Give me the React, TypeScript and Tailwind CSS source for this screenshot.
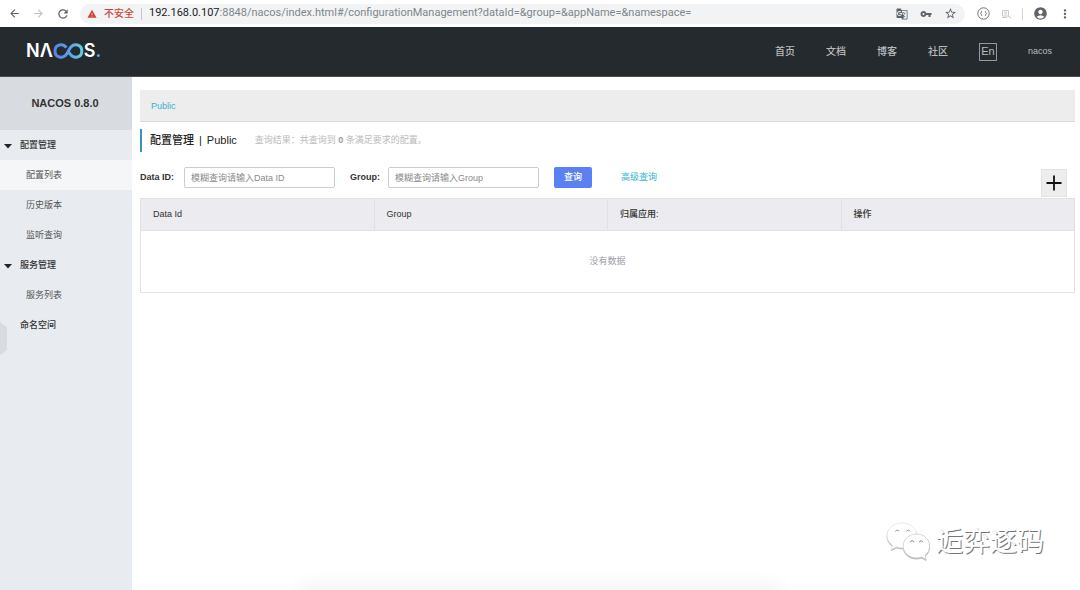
import { FC, ReactNode } from "react";
import {
  MdAccountCircle,
  MdArrowBack,
  MdArrowForward,
  MdGTranslate,
  MdMoreVert,
  MdRefresh,
  MdStarBorder,
  MdVpnKey,
  MdWarning,
} from "react-icons/md";

interface MenuItem {
  title: string;
  active?: boolean;
  children?: MenuItem[];
}

const NAV_LINKS = ["首页", "文档", "博客", "社区"];

const MENU: MenuItem[] = [
  {
    title: "配置管理",
    children: [
      { title: "配置列表", active: true },
      { title: "历史版本" },
      { title: "监听查询" },
    ],
  },
  { title: "服务管理", children: [{ title: "服务列表" }] },
  { title: "命名空间" },
];

const COLUMNS = ["Data Id", "Group", "归属应用:", "操作"];

const IconButton: FC<{ label: string; children: ReactNode }> = ({
  label,
  children,
}) => (
  <button type="button" aria-label={label} className="shrink-0">
    {children}
  </button>
);

const BrowserBar: FC = () => (
  <div className="flex h-[27px] items-center bg-white px-2 text-[#5f6368]">
    <div className="flex w-[72px] shrink-0 items-center gap-[11px]">
      <IconButton label="Back">
        <MdArrowBack size={13} />
      </IconButton>
      <IconButton label="Forward">
        <MdArrowForward size={13} className="text-[#c0c2c5]" />
      </IconButton>
      <IconButton label="Reload">
        <MdRefresh size={14} />
      </IconButton>
    </div>
    <div className="flex h-5 min-w-0 flex-1 items-center rounded-full bg-[#f1f3f4] pr-2 pl-[7px]">
      <MdWarning size={10} className="shrink-0 text-[#d0473a]" />
      <span className="mx-[7px] shrink-0 text-[10px] font-medium text-[#d0473a]">
        不安全
      </span>
      <span className="mr-[7px] h-3 w-px shrink-0 bg-[#c4c7ca]" />
      <span className="min-w-0 flex-1 truncate font-['Roboto',sans-serif] text-[11px] text-[#80868b]">
        <span className="text-[#202124]">192.168.0.107</span>
        :8848/nacos/index.html#/configurationManagement?dataId=&amp;group=&amp;appName=&amp;namespace=
      </span>
      <span className="flex items-center gap-3">
        <IconButton label="Translate">
          <MdGTranslate size={12} />
        </IconButton>
        <IconButton label="Passwords">
          <MdVpnKey size={12} />
        </IconButton>
        <IconButton label="Bookmark">
          <MdStarBorder size={13} />
        </IconButton>
      </span>
    </div>
    <div className="ml-3 flex items-center gap-2.5">
      <IconButton label="JSON viewer">
        <svg width="13" height="13" viewBox="0 0 13 13" fill="none" stroke="currentColor">
          <circle cx="6.5" cy="6.5" r="5.7" strokeWidth="0.9" />
          <path d="M5 4C4.2 4 4.5 6.5 3.6 6.5C4.5 6.5 4.2 9 5 9M8 4C8.8 4 8.5 6.5 9.4 6.5C8.5 6.5 8.8 9 8 9" strokeWidth="0.9" />
        </svg>
      </IconButton>
      <IconButton label="Extension">
        <svg width="12" height="12" viewBox="0 0 12 12" fill="none" stroke="#c9cbcd">
          <path d="M2.5 2.5H8.5V8H2.5ZM4 4.2H7M4 6H7M2 9.5H7M8 8L11 9.8" />
        </svg>
      </IconButton>
      <span className="h-3 w-px bg-[#d5d7d9]" />
      <IconButton label="Profile">
        <MdAccountCircle size={15} />
      </IconButton>
      <IconButton label="Menu">
        <MdMoreVert size={14} />
      </IconButton>
    </div>
  </div>
);

const Logo: FC = () => (
  <a
    href="#/"
    className="mb-0.5 flex items-center font-['Inter',sans-serif] text-[18px] leading-none font-semibold text-white"
  >
    <span>N</span>
    <span>Λ</span>
    <svg width="31" height="16" viewBox="0 0 31 16" fill="none" aria-hidden="true">
      <defs>
        <linearGradient id="loop" x1="0" y1="0" x2="31" y2="0" gradientUnits="userSpaceOnUse">
          <stop stopColor="#5b7fe8" />
          <stop offset="0.5" stopColor="#5a9fe8" />
          <stop offset="1" stopColor="#67d3df" />
        </linearGradient>
      </defs>
      <path
        d="M13.4 4.6C9.8 0.1 2 0.9 2 8C2 15.1 9.8 15.9 13.4 11.4L17.4 4.6C20.8 0.1 28.8 0.9 28.8 8C28.8 15.1 20.8 15.9 17.4 11.4L15.2 8.6"
        stroke="url(#loop)"
        strokeWidth="3"
      />
    </svg>
    <span>S</span>
    <span className="text-[#4fb8e0]">.</span>
  </a>
);

const Header: FC = () => (
  <header className="flex h-[50px] items-center justify-between border-b border-[#4a4e53] bg-[#252a2f] pr-7 pl-[26px] text-[#b9bbbd]">
    <Logo />
    <nav className="flex items-center gap-[31px] text-[10px]">
      {NAV_LINKS.map(link => (
        <a key={link} href="#/" className="font-medium">
          {link}
        </a>
      ))}
      <button
        type="button"
        className="h-[18px] w-[18px] border border-[#96999b] text-[11px] leading-none"
      >
        En
      </button>
      <a href="#/" className="text-[9px]">
        nacos
      </a>
    </nav>
  </header>
);

const SideMenu: FC = () => (
  <aside className="relative w-[132px] shrink-0 bg-[#e8ecf1] text-[9px] text-[#333]">
    <h1 className="flex h-[53px] items-center justify-center bg-[#d8dce1] pr-0.5 text-[11px] font-bold">
      NACOS 0.8.0
    </h1>
    <nav>
      <ul>
        {MENU.map(item => (
          <li key={item.title}>
            <a
              href="#/"
              className="flex h-[30px] items-center pt-0.5 pl-1 font-medium"
            >
              <span className="w-4">
                {item.children && (
                  <svg width="8" height="5" viewBox="0 0 8 5" aria-hidden="true">
                    <path d="M0 0H8L4 4.5Z" fill="#22262a" />
                  </svg>
                )}
              </span>
              {item.title}
            </a>
            {item.children && (
              <ul>
                {item.children.map(child => (
                  <li key={child.title}>
                    <a
                      href="#/"
                      className={
                        child.active
                          ? "flex h-[30px] items-center bg-[#f4f6f8] pt-0.5 pl-[26px] text-[#555]"
                          : "flex h-[30px] items-center pt-0.5 pl-[26px] text-[#555]"
                      }
                    >
                      {child.title}
                    </a>
                  </li>
                ))}
              </ul>
            )}
          </li>
        ))}
      </ul>
    </nav>
    <button type="button" aria-label="收起" className="absolute top-[245px] left-0">
      <svg width="7" height="33" viewBox="0 0 7 33">
        <path d="M0 0L7 5V28L0 33Z" fill="#d8dbdf" />
      </svg>
    </button>
  </aside>
);

const SearchForm: FC = () => (
  <form className="flex items-start text-[9px]" onSubmit={e => e.preventDefault()}>
    <div className="flex h-[21px] items-center">
      <label htmlFor="dataId" className="w-11 font-bold">
        Data ID:
      </label>
      <input
        id="dataId"
        placeholder="模糊查询请输入Data ID"
        className="mr-[15px] h-[21px] w-[151px] rounded-xs border border-[#c9ccd2] bg-white px-1.5 placeholder:text-[#8a8a8a]"
      />
      <label htmlFor="group" className="w-[38px] font-bold">
        Group:
      </label>
      <input
        id="group"
        placeholder="模糊查询请输入Group"
        className="mr-[15px] h-[21px] w-[151px] rounded-xs border border-[#c9ccd2] bg-white px-1.5 placeholder:text-[#8a8a8a]"
      />
      <button
        type="submit"
        className="h-[21px] w-[38px] rounded-xs bg-[#5a80f2] font-medium text-white"
      >
        查询
      </button>
      <a href="#/" className="ml-[29px] text-[#33b4d4]">
        高级查询
      </a>
    </div>
    <button
      type="button"
      aria-label="新建配置"
      className="mt-0.5 mr-2 ml-auto flex h-7 w-[26px] items-center justify-center border border-[#e2e2e2] bg-[#ededed]"
    >
      <svg width="16" height="16" viewBox="0 0 16 16" stroke="#111" strokeWidth="1.8">
        <path d="M8 0.5V15.5M0.5 8H15.5" />
      </svg>
    </button>
  </form>
);

const ConfigTable: FC = () => (
  <table className="mt-px w-full table-fixed border-collapse border border-[#e2e3e7] text-[9px]">
    <thead className="bg-[#ebebf0]">
      <tr className="h-8">
        {COLUMNS.map(column => (
          <th
            key={column}
            className="border border-[#e0e1e6] px-3 text-left font-medium text-[#333]"
          >
            {column}
          </th>
        ))}
      </tr>
    </thead>
    <tbody>
      <tr className="h-[62px]">
        <td colSpan={COLUMNS.length} className="text-center text-[#999ca3]">
          没有数据
        </td>
      </tr>
    </tbody>
  </table>
);

const Watermark: FC = () => (
  <div className="pointer-events-none absolute right-9 bottom-7 flex items-center gap-1.5">
    <svg
      width="46"
      height="42"
      viewBox="0 0 46 42"
      fill="#fff"
      className="drop-shadow-[0_1px_0_rgba(0,0,0,0.3)]"
    >
      <path
        d="M18 3C9.5 3 3 8.6 3 15.5C3 19.5 5 23 8.5 25.2L7.5 29.5L12.3 27.1C14 27.6 16 27.9 18 27.9C26.5 27.9 33 22.5 33 15.5C33 8.6 26.5 3 18 3Z"
        stroke="#dedede"
        strokeWidth="0.7"
      />
      <path
        d="M32.5 14C25 14 19.2 19.3 19.2 26C19.2 32.7 25 38 32.5 38C34.3 38 36 37.7 37.6 37.1L42 39.5L41.2 35.2C44 33 45.6 29.7 45.6 26C45.6 19.3 40 14 32.5 14Z"
        stroke="#c4c4c4"
        strokeWidth="0.7"
      />
      <g fill="none" stroke="#8b8b8b" strokeWidth="0.9">
        <path d="M11.5 11.5A1.8 1.8 0 0 1 15 11.5M22.5 11.5A1.8 1.8 0 0 1 26 11.5" />
        <path d="M26.5 22.3A1.6 1.6 0 0 1 29.7 22.3M35.5 22.3A1.6 1.6 0 0 1 38.7 22.3" />
      </g>
    </svg>
    <span className="pt-0.5 text-[27px] leading-none text-white [text-shadow:1px_1px_0_#777]">
      逅弈逐码
    </span>
  </div>
);

export default function App() {
  return (
    <div className="relative flex min-h-screen flex-col overflow-hidden bg-white font-['Liberation_Sans','Noto_Sans_CJK_SC',sans-serif] text-[#333]">
      <BrowserBar />
      <Header />
      <div className="flex flex-1">
        <SideMenu />
        <main className="min-w-0 flex-1 pt-[13px] pr-[5px] pl-2">
          <div className="flex h-8 items-center border-b border-[#dcdcdc] bg-[#ededed] px-[11px] pt-0.5 text-[9px]">
            <a href="#/" className="text-[#33b4d4]">
              Public
            </a>
          </div>
          <div className="mt-[7px] mb-[15px] flex h-[23px] items-center border-l-2 border-[#3d92bd] pl-2">
            <h2 className="flex gap-[5px] text-[11px] font-medium text-[#222]">
              <span>配置管理</span>
              <span>|</span>
              <span>Public</span>
            </h2>
            <p className="ml-[18px] text-[9px] text-[#bbb]">
              查询结果：共查询到 <strong className="text-[#999]">0</strong> 条满足要求的配置。
            </p>
          </div>
          <SearchForm />
          <ConfigTable />
        </main>
      </div>
      <div className="pointer-events-none absolute inset-x-[300px] -bottom-2 h-2 shadow-[0_0_20px_rgba(0,0,0,0.12)]" />
      <Watermark />
    </div>
  );
}
